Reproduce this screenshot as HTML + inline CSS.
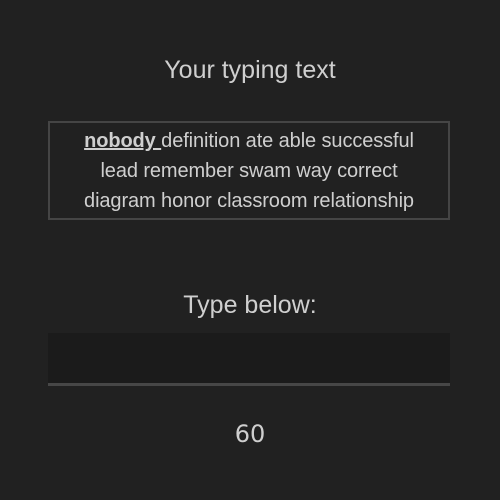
<!DOCTYPE html>
<html><head><style>
html,body{margin:0;padding:0;background:#212121;width:500px;height:500px;overflow:hidden;font-family:"Liberation Sans",sans-serif;color:#cfcfcf}
.t{position:absolute;left:0;width:500px;text-align:center}
.box{position:absolute;left:48px;top:121px;width:398px;height:92px;border:2px solid #454545;text-align:center;font-size:20px;line-height:30px;padding-top:3px;box-sizing:content-box;letter-spacing:-0.1px}
.in{position:absolute;left:48px;top:333px;width:402px;height:50px;background:#1b1b1b;border-bottom:3px solid #474747}
</style></head><body>
<div class="t" style="top:56px;font-size:25px">Your typing text</div>
<div class="box"><u style="font-weight:bold">nobody </u>definition ate able successful<br>lead remember swam way correct<br>diagram honor classroom relationship</div>
<div class="t" style="top:291px;font-size:25px">Type below:</div>
<div class="in"></div>
<div class="t" style="top:420px;font-size:24px;font-family:'DejaVu Sans',sans-serif">60</div>
</body></html>
